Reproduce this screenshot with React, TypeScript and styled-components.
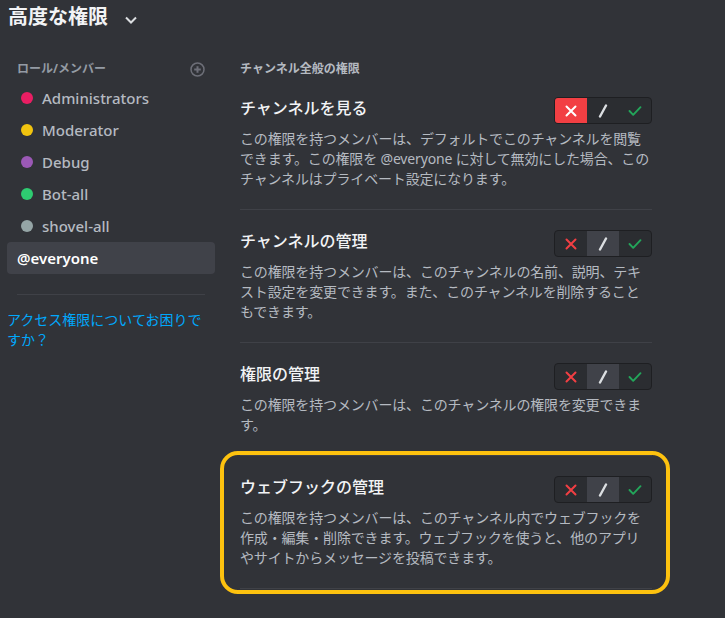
import React from "react";
import styled, { createGlobalStyle, css } from "styled-components";

const GlobalStyle = createGlobalStyle`
  html, body {
    margin: 0;
    padding: 0;
    background: #313338;
  }
  body {
    font-family: "Noto Sans", "Noto Sans CJK JP", sans-serif;
    -webkit-font-smoothing: antialiased;
  }
  * { box-sizing: border-box; }
`;

const Page = styled.div`
  min-height: 100vh;
  background: #313338;
  overflow: hidden;
`;

const TopBar = styled.header`
  display: flex;
  align-items: center;
  gap: 17px;
  height: 31px;
  padding: 3px 8px 0;
`;

const Title = styled.h1`
  margin: 0;
  font-size: 20px;
  line-height: 28px;
  font-weight: 700;
  color: #f2f3f5;
`;

const ChevronWrap = styled.span`
  display: flex;
  margin-top: 5px;
`;

const Layout = styled.div`
  display: flex;
  align-items: flex-start;
  padding: 30px 0 0 7px;
`;

const Sidebar = styled.aside`
  width: 208px;
  flex-shrink: 0;
`;

const SideHeader = styled.div`
  display: flex;
  align-items: center;
  justify-content: space-between;
  height: 16px;
  padding: 0 10px;
  margin-bottom: 5px;
  font-size: 12px;
  line-height: 16px;
  font-weight: 700;
  color: #949ba4;
`;

const RoleItem = styled.div<{ $selected?: boolean }>`
  display: flex;
  align-items: center;
  height: 32px;
  padding: 0 10px;
  border-radius: 4px;
  font-size: 15px;
  font-weight: 500;
  color: #b5bac1;
  ${(p) =>
    p.$selected &&
    css`
      background: #404249;
      color: #ffffff;
      font-weight: 600;
    `}
`;

const Dot = styled.span<{ $color: string }>`
  width: 12px;
  height: 12px;
  border-radius: 50%;
  background: ${(p) => p.$color};
  margin: 0 9px 0 4px;
  flex-shrink: 0;
`;

const SideDivider = styled.div`
  height: 1px;
  background: #3f4147;
  margin: 20px 10px 15px;
`;

const HelpLink = styled.a`
  display: block;
  font-size: 14px;
  line-height: 20px;
  color: #00a8fc;
  text-decoration: none;
`;

const Main = styled.main`
  width: 412px;
  margin-left: 25px;
`;

const SectionTitle = styled.h2`
  margin: 0;
  font-size: 12px;
  line-height: 16px;
  font-weight: 700;
  color: #b5bac1;
`;

const PermRow = styled.section<{ $highlight?: boolean }>`
  position: relative;
  padding: 20px 0;
  border-bottom: 1px solid #3f4147;
  ${(p) =>
    p.$highlight &&
    css`
      &::after {
        content: "";
        position: absolute;
        top: -5px;
        bottom: -6px;
        left: -20px;
        right: -18px;
        border: 4px solid #fdc20f;
        border-radius: 18px;
        pointer-events: none;
      }
    `}
`;

const PermHead = styled.div`
  display: flex;
  align-items: flex-start;
  justify-content: space-between;
`;

const PermName = styled.h3`
  margin: 0;
  font-size: 16px;
  line-height: 22px;
  font-weight: 500;
  color: #f2f3f5;
`;

const Desc = styled.p`
  margin: 5px 0 0;
  font-size: 14px;
  line-height: 20px;
  letter-spacing: -0.16px;
  color: #b5bac1;
`;

const Toggle = styled.div`
  display: flex;
  height: 27px;
  border: 1px solid #1e1f22;
  border-radius: 4px;
  overflow: hidden;
  background: #2b2d31;
  flex-shrink: 0;
`;

type SegKind = "deny" | "neutral" | "allow";

const Seg = styled.div<{ $kind: SegKind; $active: boolean }>`
  width: 32px;
  display: flex;
  align-items: center;
  justify-content: center;
  background: ${(p) =>
    !p.$active
      ? "transparent"
      : p.$kind === "deny"
      ? "#f23f43"
      : p.$kind === "allow"
      ? "#23a55a"
      : "#404249"};
`;

const XIcon = ({ color }: { color: string }) => (
  <svg width="12" height="12" viewBox="0 0 12 12">
    <path d="M1.5 1.5 L10.5 10.5 M10.5 1.5 L1.5 10.5" stroke={color} strokeWidth="2" strokeLinecap="round" />
  </svg>
);

const SlashIcon = ({ color }: { color: string }) => (
  <svg width="12" height="14" viewBox="0 0 12 14">
    <path d="M3 12.5 L9 1.5" stroke={color} strokeWidth="2.4" strokeLinecap="round" />
  </svg>
);

const CheckIcon = ({ color }: { color: string }) => (
  <svg width="14" height="12" viewBox="0 0 14 12">
    <path d="M1.5 6 L5.2 9.8 L12.5 2.2" stroke={color} strokeWidth="1.9" fill="none" strokeLinecap="round" strokeLinejoin="round" />
  </svg>
);

const PermToggle = ({ value }: { value: SegKind }) => (
  <Toggle>
    <Seg $kind="deny" $active={value === "deny"}>
      <XIcon color={value === "deny" ? "#ffffff" : "#f23f43"} />
    </Seg>
    <Seg $kind="neutral" $active={value === "neutral"}>
      <SlashIcon color="#dbdee1" />
    </Seg>
    <Seg $kind="allow" $active={value === "allow"}>
      <CheckIcon color={value === "allow" ? "#ffffff" : "#23a55a"} />
    </Seg>
  </Toggle>
);

const roles = [
  { name: "Administrators", color: "#e91e63" },
  { name: "Moderator", color: "#f1c40f" },
  { name: "Debug", color: "#9b59b6" },
  { name: "Bot-all", color: "#2ecc71" },
  { name: "shovel-all", color: "#95a5a6" },
];

const perms: { name: string; desc: string; value: SegKind; highlight?: boolean }[] = [
  {
    name: "チャンネルを見る",
    desc: "この権限を持つメンバーは、デフォルトでこのチャンネルを閲覧できます。この権限を @everyone に対して無効にした場合、このチャンネルはプライベート設定になります。",
    value: "deny",
  },
  {
    name: "チャンネルの管理",
    desc: "この権限を持つメンバーは、このチャンネルの名前、説明、テキスト設定を変更できます。また、このチャンネルを削除することもできます。",
    value: "neutral",
  },
  {
    name: "権限の管理",
    desc: "この権限を持つメンバーは、このチャンネルの権限を変更できます。",
    value: "neutral",
  },
  {
    name: "ウェブフックの管理",
    desc: "この権限を持つメンバーは、このチャンネル内でウェブフックを作成・編集・削除できます。ウェブフックを使うと、他のアプリやサイトからメッセージを投稿できます。",
    value: "neutral",
    highlight: true,
  },
];

export default function App() {
  return (
    <Page>
      <GlobalStyle />
      <TopBar>
        <Title>高度な権限</Title>
        <ChevronWrap>
          <svg width="12" height="8" viewBox="0 0 12 8">
            <path d="M1 1.5 L6 6.5 L11 1.5" stroke="#dbdee1" strokeWidth="2" fill="none" />
          </svg>
        </ChevronWrap>
      </TopBar>
      <Layout>
        <Sidebar>
          <SideHeader>
            <span>ロール/メンバー</span>
            <svg width="15" height="15" viewBox="0 0 15 15">
              <circle cx="7.5" cy="7.5" r="6.5" stroke="#6d6f78" strokeWidth="1.5" fill="none" />
              <path d="M7.5 4.2 V10.8 M4.2 7.5 H10.8" stroke="#6d6f78" strokeWidth="2" />
            </svg>
          </SideHeader>
          {roles.map((r) => (
            <RoleItem key={r.name}>
              <Dot $color={r.color} />
              {r.name}
            </RoleItem>
          ))}
          <RoleItem $selected>@everyone</RoleItem>
          <SideDivider />
          <HelpLink href="#">アクセス権限についてお困りですか？</HelpLink>
        </Sidebar>
        <Main>
          <SectionTitle>チャンネル全般の権限</SectionTitle>
          {perms.map((p) => (
            <PermRow key={p.name} $highlight={p.highlight}>
              <PermHead>
                <PermName>{p.name}</PermName>
                <PermToggle value={p.value} />
              </PermHead>
              <Desc>{p.desc}</Desc>
            </PermRow>
          ))}
        </Main>
      </Layout>
    </Page>
  );
}
